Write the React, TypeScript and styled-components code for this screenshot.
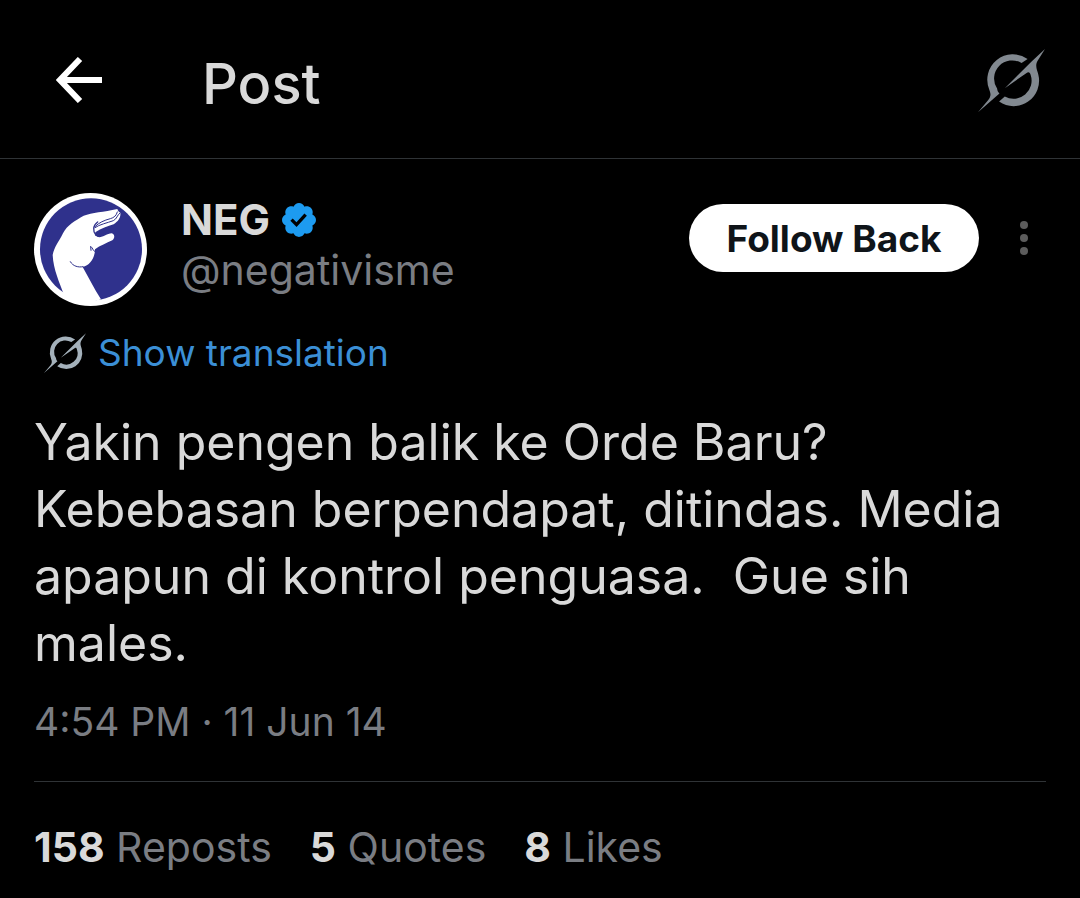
import React from "react";
import styled, { createGlobalStyle } from "styled-components";

const GlobalStyle = createGlobalStyle`
  *, *::before, *::after { box-sizing: border-box; }
  body {
    margin: 0;
    background: #000;
    color: #d9d9d9;
    font-family: Inter, "Liberation Sans", sans-serif;
  }
  h1, h2, p { margin: 0; }
  svg { display: block; flex: none; }
`;

const Page = styled.div`
  width: 100%;
  background: #000;
`;

const Header = styled.header`
  display: flex;
  align-items: center;
  height: 159px;
  padding: 2px 35px 0 34px;
  border-bottom: 1px solid #2f3336;
`;

const IconButton = styled.button<{ $width: number }>`
  display: flex;
  align-items: center;
  justify-content: center;
  flex: none;
  width: ${({ $width }) => $width}px;
  height: 68px;
  padding: 0;
  border: 0;
  background: none;
  cursor: pointer;
`;

const Title = styled.h1`
  flex: 1;
  padding: 8px 0 0 78px;
  font-size: 56px;
  line-height: 64px;
  font-weight: 500;
`;

const Post = styled.article`
  padding: 34px 34px 24px;
`;

const Author = styled.div`
  display: flex;
  align-items: flex-start;
`;

const Names = styled.div`
  flex: 1;
  min-width: 0;
  padding: 2px 0 0 34px;
`;

const NameRow = styled.div`
  display: flex;
  align-items: center;
  gap: 12px;
`;

const Name = styled.h2`
  font-size: 42px;
  line-height: 50px;
  font-weight: 700;
`;

const Handle = styled.p`
  font-size: 41px;
  line-height: 50px;
  color: #7a7d83;
`;

const Actions = styled.div`
  display: flex;
  align-items: center;
  gap: 23px;
  padding-top: 11px;
`;

const FollowButton = styled.button`
  width: 290px;
  height: 68px;
  padding: 0;
  border: 0;
  border-radius: 34px;
  background: #fff;
  color: #0f1419;
  font-family: inherit;
  font-size: 37px;
  font-weight: 700;
  white-space: nowrap;
  cursor: pointer;
`;

const Translate = styled.a`
  display: inline-flex;
  align-items: center;
  gap: 12px;
  margin-top: 22px;
  padding-left: 10px;
  font-size: 37px;
  line-height: 50px;
  color: #3b8fd6;
  text-decoration: none;
`;

const Body = styled.p`
  margin-top: 31px;
  font-size: 50px;
  line-height: 67px;
  white-space: pre-wrap;
`;

const Time = styled.p`
  margin-top: 20px;
  padding-bottom: 34px;
  border-bottom: 1px solid #2f3336;
  font-size: 39px;
  line-height: 50px;
  color: #7a7d83;
`;

const Stats = styled.div`
  display: flex;
  gap: 38px;
  margin-top: 40px;
`;

const Stat = styled.a`
  font-size: 41px;
  line-height: 50px;
  color: #7a7d83;
  text-decoration: none;
  white-space: nowrap;
`;

const Count = styled.strong`
  font-weight: 700;
  color: #d9d9d9;
`;

function GrokIcon({ size, color }: { size: number; color: string }) {
  return (
    <svg width={size} height={size} viewBox="24 48 200 200" fill={color} aria-hidden="true">
      <path d="M24 243 L54 207 C64 194 62 187 58 176 A76 76 0 0 1 172 84 L154 96 A54 54 0 0 0 81 172 C82 178 83 182 88 187 Z" />
      <path d="M224 54 L184 91 L104 171 L168 126 C175 121 179 123 181 131 A54 54 0 0 1 104 196 L87 211 A76 76 0 0 0 204 130 C201 117 193 105 202 89 Z" />
    </svg>
  );
}

function BackArrow() {
  return (
    <svg width="46" height="46" viewBox="0 0 46 46" fill="none" stroke="#fff" strokeWidth="6" aria-hidden="true">
      <path d="M24 2 L4 23 L24 44 M4 23 H46" />
    </svg>
  );
}

function VerifiedBadge() {
  return (
    <svg width="34" height="34" viewBox="1.75 1.75 20.5 20.5" fill="#1d9bf0" role="img" aria-label="Verified">
      <path d="M22.25 12c0-1.43-.88-2.67-2.19-3.34.46-1.39.2-2.9-.81-3.91s-2.52-1.27-3.91-.81c-.66-1.31-1.91-2.19-3.34-2.19s-2.67.88-3.33 2.19c-1.4-.46-2.91-.2-3.92.81s-1.26 2.52-.8 3.91c-1.31.67-2.2 1.91-2.2 3.34s.89 2.67 2.2 3.34c-.46 1.39-.21 2.9.8 3.91s2.52 1.26 3.91.81c.67 1.31 1.91 2.19 3.34 2.19s2.68-.88 3.34-2.19c1.39.45 2.9.2 3.91-.81s1.27-2.52.81-3.91c1.31-.67 2.19-1.91 2.19-3.34zm-11.71 4.2L6.8 12.46l1.41-1.42 2.26 2.26 4.8-5.23 1.47 1.36-6.2 6.77z" />
    </svg>
  );
}

function Avatar() {
  return (
    <svg width="113" height="113" viewBox="41 39 339 339" role="img" aria-label="NEG">
      <circle cx="210.500" cy="208.500" r="169.500" fill="#fff" />
      <circle cx="212" cy="208" r="153" fill="#2f318c" />
      <path
        fill="#fff"
        d="M130 342 C118 308 99 270 97 225 C102 200 116 185 128 160 C140 135 165 122 190 107 C215 98 250 96 291 87 C293 93 295 96 300 98 C302 112 294 124 280 133 C262 139 242 146 226 156 C222 161 224 167 232 171 C247 174 259 161 274 160 C284 163 284 174 276 181 C258 190 240 196 224 208 C224 232 210 256 187 261 C205 292 221 326 242 358 C215 370 160 368 130 342 Z"
      />
      <g fill="none" stroke="#2f318c" strokeLinecap="round" strokeLinejoin="round">
        <path strokeWidth="3" d="M291 96 C288 107 281 113 270 116 C251 121 236 128 225 139 M299 99 C290 105 290 117 279 122 C260 129 238 133 224 143" />
        <path strokeWidth="4" d="M232 126 C218 136 216 151 227 166" />
        <path strokeWidth="3" d="M150 245 C158 259 174 263 188 260 M211 200 L212 211 M212 200 C219 205 216 211 223 214" />
      </g>
    </svg>
  );
}

function MoreIcon() {
  return (
    <svg width="8" height="34" viewBox="0 0 8 34" fill="#5c5c5c" aria-hidden="true">
      <circle cx="4" cy="4" r="4" />
      <circle cx="4" cy="17" r="4" />
      <circle cx="4" cy="30" r="4" />
    </svg>
  );
}

const stats = [
  { count: 158, label: "Reposts" },
  { count: 5, label: "Quotes" },
  { count: 8, label: "Likes" },
];

export default function App() {
  return (
    <Page>
      <GlobalStyle />
      <Header>
        <IconButton $width={90} type="button" aria-label="Back">
          <BackArrow />
        </IconButton>
        <Title>Post</Title>
        <IconButton $width={67} type="button" aria-label="Grok">
          <GrokIcon size={67} color="#828990" />
        </IconButton>
      </Header>
      <Post>
        <Author>
          <Avatar />
          <Names>
            <NameRow>
              <Name>NEG</Name>
              <VerifiedBadge />
            </NameRow>
            <Handle>@negativisme</Handle>
          </Names>
          <Actions>
            <FollowButton type="button">Follow Back</FollowButton>
            <IconButton $width={44} type="button" aria-label="More">
              <MoreIcon />
            </IconButton>
          </Actions>
        </Author>
        <Translate href="#translation">
          <GrokIcon size={42} color="#a4b1bb" />
          Show translation
        </Translate>
        <Body>
          {"Yakin pengen balik ke Orde Baru? Kebebasan berpendapat, ditindas. Media apapun di kontrol penguasa.  Gue sih males."}
        </Body>
        <Time>4:54 PM · 11 Jun 14</Time>
        <Stats>
          {stats.map(({ count, label }) => (
            <Stat key={label} href={`#${label.toLowerCase()}`}>
              <Count>{count}</Count> {label}
            </Stat>
          ))}
        </Stats>
      </Post>
    </Page>
  );
}
